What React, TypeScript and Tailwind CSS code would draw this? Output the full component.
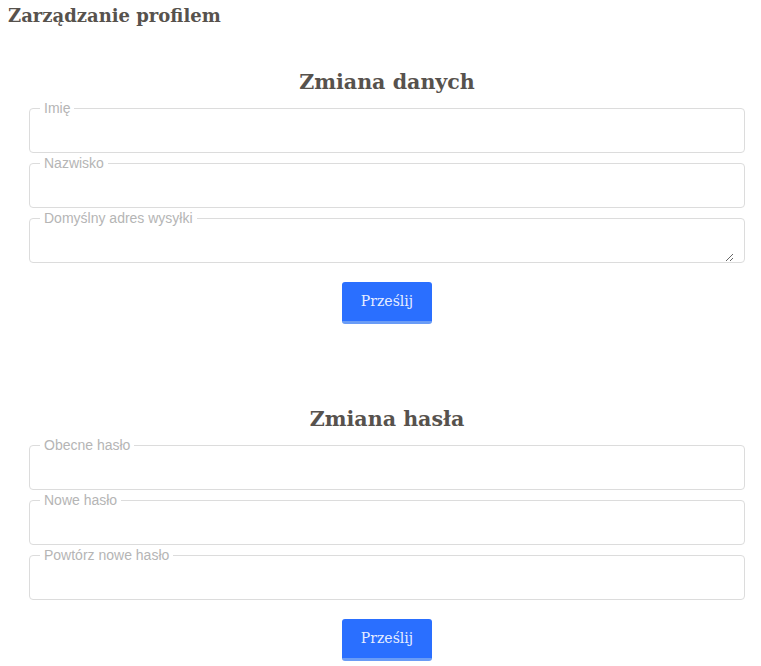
import React from "react";

const SERIF = "font-['DejaVu_Serif','Liberation_Serif',serif]";

type Field = { label: string; type?: string; area?: boolean };

const dataFields: Field[] = [
  { label: "Imię" },
  { label: "Nazwisko" },
  { label: "Domyślny adres wysyłki", area: true },
];

const passFields: Field[] = [
  { label: "Obecne hasło", type: "password" },
  { label: "Nowe hasło", type: "password" },
  { label: "Powtórz nowe hasło", type: "password" },
];

function FieldBox({ field }: { field: Field }) {
  return (
    <fieldset className="mb-[2px] rounded-[4px] border border-[#dcdcdc] px-[10px]">
      <legend className="px-[4px] text-[14px] leading-[16px] text-[#b5b5b5] font-['Liberation_Sans',Arial,sans-serif]">
        {field.label}
      </legend>
      {field.area ? (
        <textarea className="block h-[36px] w-full resize-y bg-transparent text-[14px] outline-none" />
      ) : (
        <input type={field.type ?? "text"} className="block h-[36px] w-full bg-transparent text-[14px] outline-none" />
      )}
    </fieldset>
  );
}

function FormSection({ title, fields }: { title: string; fields: Field[] }) {
  return (
    <form className="flex flex-col" onSubmit={(e) => e.preventDefault()}>
      <h2 className={`${SERIF} text-center text-[20.6px] leading-[30px] font-bold text-[#57524d]`}>{title}</h2>
      <div className="mt-[3px] flex flex-col">
        {fields.map((f) => (
          <FieldBox key={f.label} field={f} />
        ))}
      </div>
      <div className="mt-[17px] flex justify-center">
        <button
          type="submit"
          className={`${SERIF} h-[42px] w-[90px] rounded-[3px] border-b-[3px] border-[#6a9cf6] bg-[#2a6fff] text-[14px] text-[#e6edff]`}
        >
          Prześlij
        </button>
      </div>
    </form>
  );
}

export default function App() {
  return (
    <div className="min-h-[666px] w-[761px] bg-white">
      <h1 className={`${SERIF} px-[8px] pt-[2px] text-[18px] leading-[28px] font-bold text-[#57524d]`}>Zarządzanie profilem</h1>
      <div className="ml-[29px] mr-[16px] mt-[37px] flex flex-col gap-[80px]">
        <FormSection title="Zmiana danych" fields={dataFields} />
        <FormSection title="Zmiana hasła" fields={passFields} />
      </div>
    </div>
  );
}
